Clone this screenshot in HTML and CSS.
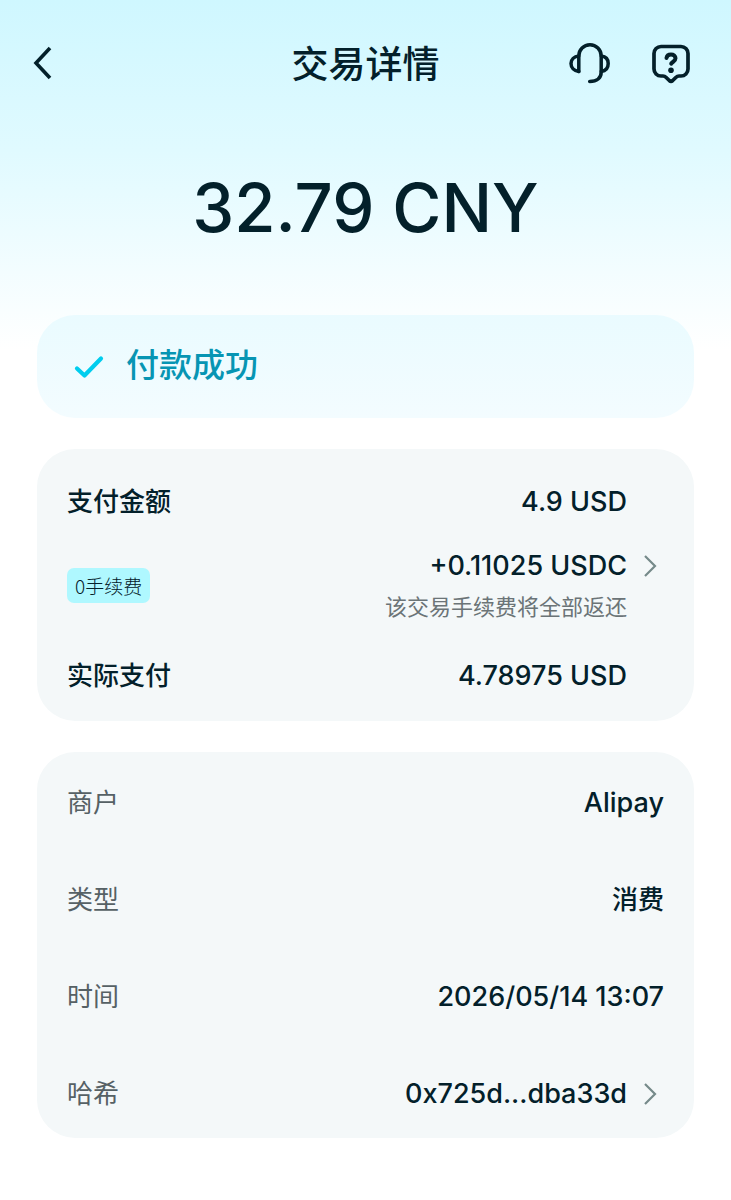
FILE: index.html
```html
<!DOCTYPE html>
<html lang="zh-CN">
<head>
  <meta charset="UTF-8">
  <meta name="viewport" content="width=device-width, initial-scale=1">
  <title>交易详情</title>
  <link rel="stylesheet" href="styles.css">
</head>
<body>

  <header class="topbar">
    <button class="back" type="button" aria-label="返回">
      <svg width="24" height="36" viewBox="0 0 24 36"><path d="M18 3 4 18 18 33" stroke-width="3.6"/></svg>
    </button>
    <h1>交易详情</h1>
    <div class="actions">
      <button type="button" aria-label="客服">
        <!-- headset -->
        <svg width="42" height="42" viewBox="0 0 42 42" stroke-width="3.5">
          <path d="M10.800 29.500V14a11.200 11.200 0 0 1 22.400 0v16c0 6-4.200 9.500-11.500 9.500"/>
          <path d="M10.800 14C6 14.500 3 17.500 3 21.600s3 7.400 7.800 7.900"/>
          <path d="M33.200 14c4.800.5 7 3.500 7 7.600s-2.200 7.400-7 7.900"/>
        </svg>
      </button>
      <button type="button" aria-label="帮助">
        <svg width="42" height="42" viewBox="0 0 42 42" stroke-width="3.7">
          <path d="M11 4.500h20a7 7 0 0 1 7 7v15.500a7 7 0 0 1-7 7h-2c-1.300 0-2.200.5-3.200 1.500l-3.100 3c-1 .9-2.400.9-3.400 0l-3.100-3c-1-1-1.900-1.500-3.200-1.500H11a7 7 0 0 1-7-7V11.500a7 7 0 0 1 7-7z"/>
          <path d="M16.500 16c.3-2.100 2-3.500 4.500-3.500 2.600 0 4.500 1.500 4.500 3.800 0 3.200-3.300 3.200-4.300 5.400" stroke-width="4"/>
          <circle class="dot" cx="21" cy="28.200" r="2.800"/>
        </svg>
      </button>
    </div>
  </header>

  <main>
    <p class="amount">32.79 CNY</p>

    <section class="card status">
      <svg width="30" height="24" viewBox="0 0 30 24"><path d="M3 13.500 10.500 20.500 27 3.500" stroke-width="4.200"/></svg>
      <span>付款成功</span>
    </section>

    <dl class="card payment">
      <div class="row strong">
        <dt>支付金额</dt>
        <dd>4.9 USD</dd>
      </div>
      <div class="row">
        <dt><span class="badge">0手续费</span></dt>
        <dd>
          <button class="more" type="button">+0.11025 USDC
            <svg width="14" height="26" viewBox="0 0 14 26"><path d="M2 3 12 13 2 23" stroke-width="2.200"/></svg>
          </button>
          <span class="note">该交易手续费将全部返还</span>
        </dd>
      </div>
      <div class="row strong">
        <dt>实际支付</dt>
        <dd>4.78975 USD</dd>
      </div>
    </dl>

    <dl class="card details">
      <div class="row">
        <dt>商户</dt>
        <dd>Alipay</dd>
      </div>
      <div class="row">
        <dt>类型</dt>
        <dd class="zh">消费</dd>
      </div>
      <div class="row">
        <dt>时间</dt>
        <dd>2026/05/14 13:07</dd>
      </div>
      <div class="row">
        <dt>哈希</dt>
        <dd>
          <button class="more" type="button">0x725d...dba33d
            <svg width="14" height="26" viewBox="0 0 14 26"><path d="M2 3 12 13 2 23" stroke-width="2.200"/></svg>
          </button>
        </dd>
      </div>
    </dl>
  </main>

</body>
</html>
```
FILE: styles.css
```css
* {
  box-sizing: border-box;
}

body {
  margin: 0;
  min-height: 100vh;
  padding: 0 37px 62px;
  font-family: Inter, "Noto Sans CJK SC", sans-serif;
  font-size: 26px;
  line-height: 36px;
  color: #03202a;
  background: #fff linear-gradient(#cff7ff, #e0faff 150px, #fff 350px) no-repeat;
}

h1, p, dl, dd {
  margin: 0;
}

button {
  padding: 0;
  border: 0;
  background: none;
  font: inherit;
  color: inherit;
  cursor: pointer;
}

svg {
  display: block;
  flex: none;
  fill: none;
  stroke: currentColor;
  stroke-linecap: round;
  stroke-linejoin: round;
}

.topbar {
  display: grid;
  grid-template-columns: 1fr auto 1fr;
  align-items: center;
  height: 126px;
}

.topbar h1 {
  padding-top: 3px;
  font-size: 37px;
  font-weight: 500;
  line-height: 48px;
}

.back {
  justify-self: start;
  margin-left: -5px;
}

.back svg {
  stroke-linecap: butt;
  stroke-linejoin: miter;
}

.actions {
  display: flex;
  justify-content: flex-end;
  gap: 40px;
  padding-right: 2px;
}

.dot {
  fill: currentColor;
  stroke: none;
}

.amount {
  padding: 42px 0 67px;
  font-size: 67px;
  font-weight: 500;
  line-height: 80px;
  text-align: center;
}

.card {
  margin-bottom: 31px;
  padding: 35px 30px 27px;
  border-radius: 38px;
  background: #f4f8f9;
}

.status {
  display: flex;
  align-items: center;
  gap: 22px;
  min-height: 103px;
  padding: 0 37px;
  font-size: 33px;
  font-weight: 500;
  color: #0795b3;
  background: linear-gradient(#eafbff, #f3fcff);
}

.status svg {
  color: #00cdee;
}

.status span {
  padding-bottom: 4px;
}

.payment,
.details {
  display: flex;
  flex-direction: column;
  gap: 28px;
}

.details {
  gap: 61px;
  padding: 33px 30px 26px;
  margin-bottom: 0;
}

.row {
  display: flex;
  justify-content: space-between;
  align-items: center;
}

.row dt {
  font-weight: 400;
  color: #566165;
}

.row dd {
  font-size: 27px;
  font-weight: 500;
  text-align: right;
}

.row .zh {
  font-size: 26px;
}

.strong dt {
  font-weight: 500;
  color: #03202a;
}

/* the values line up left of the chevron */
.strong dd,
.note {
  padding-right: 37px;
}

.badge {
  display: block;
  margin-bottom: 8px;
  padding: 0 8px;
  border-radius: 7px;
  font-family: "Noto Sans CJK SC", sans-serif;
  font-size: 19px;
  font-weight: 300;
  line-height: 35px;
  color: #03202a;
  background: #aff8ff;
}

.more {
  display: flex;
  align-items: center;
  justify-content: flex-end;
  gap: 16px;
  margin-left: auto;
  padding-right: 7px;
}

.more svg {
  color: #768a8a;
  stroke-linecap: butt;
  stroke-linejoin: miter;
}

.note {
  display: block;
  font-size: 22px;
  font-weight: 400;
  line-height: 46px;
  color: #6b7477;
}
```
